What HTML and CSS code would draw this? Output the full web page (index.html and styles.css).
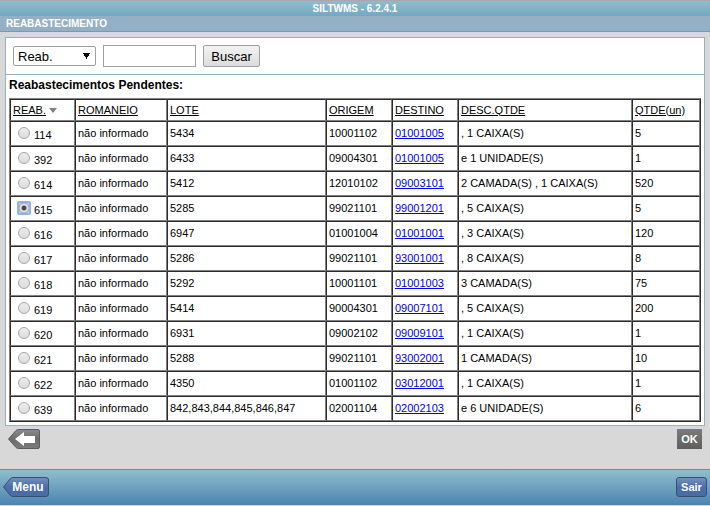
FILE: index.html
```html
<!DOCTYPE html>
<html lang="pt-BR">
<head>
  <meta charset="UTF-8">
  <meta name="viewport" content="width=device-width, initial-scale=1.0">
  <title>SILTWMS - 6.2.4.1</title>
  <link rel="stylesheet" href="styles.css">
</head>
<body>
  <header>
    <div class="system-title">SILTWMS - 6.2.4.1</div>
    <h1 class="screen-title">REABASTECIMENTO</h1>
  </header>

  <form id="formReab" class="main">
    <div class="panel">
      <!-- Filtro -->
      <div class="filter">
        <select class="filter-field" name="campo" aria-label="Campo">
          <option>Reab.</option>
          <option>Lote</option>
          <option>Origem</option>
          <option>Destino</option>
        </select>
        <input class="filter-text" type="text" name="valor" aria-label="Valor">
        <button class="search" type="button">Buscar</button>
      </div>

      <h2 class="list-title">Reabastecimentos Pendentes:</h2>
      <table class="list">
        <colgroup>
          <col class="col-reab">
          <col class="col-romaneio">
          <col class="col-lote">
          <col class="col-endereco">
          <col class="col-endereco">
          <col>
          <col class="col-qtde">
        </colgroup>
        <thead>
          <tr>
            <th><a href="#">REAB.</a><svg class="sort" width="8" height="5" viewBox="0 0 8 5"><path d="M0 0h8L4 5z" fill="#808080"/></svg></th>
            <th><a href="#">ROMANEIO</a></th>
            <th><a href="#">LOTE</a></th>
            <th><a href="#">ORIGEM</a></th>
            <th><a href="#">DESTINO</a></th>
            <th><a href="#">DESC.QTDE</a></th>
            <th><a href="#">QTDE(un)</a></th>
          </tr>
        </thead>
        <tbody>
          <tr><td><label><input type="radio" name="reab" value="114">114</label></td><td>não informado</td><td>5434</td><td>10001102</td><td><a href="#">01001005</a></td><td>, 1 CAIXA(S)</td><td>5</td></tr>
          <tr><td><label><input type="radio" name="reab" value="392">392</label></td><td>não informado</td><td>6433</td><td>09004301</td><td><a href="#">01001005</a></td><td>e 1 UNIDADE(S)</td><td>1</td></tr>
          <tr><td><label><input type="radio" name="reab" value="614">614</label></td><td>não informado</td><td>5412</td><td>12010102</td><td><a href="#">09003101</a></td><td>2 CAMADA(S) , 1 CAIXA(S)</td><td>520</td></tr>
          <tr><td><label><input type="radio" name="reab" value="615" checked>615</label></td><td>não informado</td><td>5285</td><td>99021101</td><td><a href="#">99001201</a></td><td>, 5 CAIXA(S)</td><td>5</td></tr>
          <tr><td><label><input type="radio" name="reab" value="616">616</label></td><td>não informado</td><td>6947</td><td>01001004</td><td><a href="#">01001001</a></td><td>, 3 CAIXA(S)</td><td>120</td></tr>
          <tr><td><label><input type="radio" name="reab" value="617">617</label></td><td>não informado</td><td>5286</td><td>99021101</td><td><a href="#">93001001</a></td><td>, 8 CAIXA(S)</td><td>8</td></tr>
          <tr><td><label><input type="radio" name="reab" value="618">618</label></td><td>não informado</td><td>5292</td><td>10001101</td><td><a href="#">01001003</a></td><td>3 CAMADA(S)</td><td>75</td></tr>
          <tr><td><label><input type="radio" name="reab" value="619">619</label></td><td>não informado</td><td>5414</td><td>90004301</td><td><a href="#">09007101</a></td><td>, 5 CAIXA(S)</td><td>200</td></tr>
          <tr><td><label><input type="radio" name="reab" value="620">620</label></td><td>não informado</td><td>6931</td><td>09002102</td><td><a href="#">09009101</a></td><td>, 1 CAIXA(S)</td><td>1</td></tr>
          <tr><td><label><input type="radio" name="reab" value="621">621</label></td><td>não informado</td><td>5288</td><td>99021101</td><td><a href="#">93002001</a></td><td>1 CAMADA(S)</td><td>10</td></tr>
          <tr><td><label><input type="radio" name="reab" value="622">622</label></td><td>não informado</td><td>4350</td><td>01001102</td><td><a href="#">03012001</a></td><td>, 1 CAIXA(S)</td><td>1</td></tr>
          <tr><td><label><input type="radio" name="reab" value="639">639</label></td><td>não informado</td><td>842,843,844,845,846,847</td><td>02001104</td><td><a href="#">02002103</a></td><td>e 6 UNIDADE(S)</td><td>6</td></tr>
        </tbody>
      </table>
    </div>

    <div class="actions">
      <button class="back" type="button" aria-label="Voltar">
        <svg width="32" height="20" viewBox="0 0 32 20">
          <defs>
            <linearGradient id="gray" x1="0" y1="0" x2="0" y2="1">
              <stop offset="0" stop-color="#8c8c8c"/>
              <stop offset="0.5" stop-color="#6c6c6c"/>
              <stop offset="1" stop-color="#7c7c7c"/>
            </linearGradient>
          </defs>
          <path d="M0.5 10L8 1.5Q9 0.5 10.5 0.5H30Q31.5 0.5 31.5 2V18Q31.5 19.5 30 19.5H10.5Q9 19.5 8 18.5Z" fill="url(#gray)" stroke="#5c5c5c"/>
          <path d="M7 10l9-7v4h11v7H16v3z" fill="#fff"/>
        </svg>
      </button>
      <button class="ok" type="submit">OK</button>
    </div>
  </form>

  <footer>
    <button class="menu" type="button">
      <svg class="menu-shape" width="46" height="20" viewBox="0 0 46 20">
        <defs>
          <linearGradient id="blue" x1="0" y1="0" x2="0" y2="1">
            <stop offset="0" stop-color="#7391bd"/>
            <stop offset="0.5" stop-color="#4a6ea9"/>
            <stop offset="1" stop-color="#4a6ca4"/>
          </linearGradient>
        </defs>
        <path d="M0.5 10L7 2Q8.5 0.5 10 0.5H43Q45.5 0.5 45.5 3V17Q45.5 19.5 43 19.5H10Q8.5 19.5 7 18Z" fill="url(#blue)" stroke="#375073"/>
      </svg>
      <span class="menu-text">Menu</span>
    </button>
    <button class="exit" type="button">Sair</button>
  </footer>

  <script>
    document.getElementById("formReab").addEventListener("submit", function (event) {
      event.preventDefault();
    });
  </script>
</body>
</html>
```
FILE: styles.css
```css
body {
  margin: 0;
  min-height: 100vh;
  display: flex;
  flex-direction: column;
  background-color: #d8d8d8;
  color: #000;
  font-family: "Liberation Sans", Arial, sans-serif;
  font-size: 11px;
}
h1,
h2 {
  margin: 0;
}
button {
  padding: 0;
  font-family: inherit;
  cursor: pointer;
}

/* Header */
.system-title {
  height: 15px;
  line-height: 15px;
  border-top: 1px solid #a9a9a9;
  background: linear-gradient(#8fbccd, #74a8c1);
  color: #fff;
  font-size: 10px;
  font-weight: bold;
  text-align: center;
}
.screen-title {
  height: 15px;
  line-height: 15px;
  padding-left: 6px;
  border-bottom: 1px solid #7a9ab3;
  background-color: #95b0c4;
  color: #fff;
  font-size: 10px;
}

/* Content */
.main {
  padding: 5px 5px 20px;
}
.panel {
  border: 1px solid #94b1c6;
  background-color: #fff;
  padding-bottom: 3px;
}
.filter {
  display: flex;
  align-items: center;
  gap: 7px;
  height: 36px;
  padding-left: 7px;
  border-bottom: 1px solid #94b1c6;
}
.filter-field {
  appearance: none;
  width: 83px;
  height: 20px;
  padding: 0 4px;
  border: 1px solid #a0a0a0;
  border-radius: 2px;
  background-color: #fff;
  /* drop-down arrow */
  background-image: conic-gradient(from -30deg at 50% 100%, #000 60deg, transparent 0);
  background-position: right 5px center;
  background-size: 7px 6px;
  background-repeat: no-repeat;
  font-family: inherit;
  font-size: 13px;
  color: #000;
}
.filter-text {
  box-sizing: border-box;
  width: 93px;
  height: 22px;
  padding: 1px 3px;
  border: 1px solid #a0a0a0;
  font-family: inherit;
  font-size: 13px;
}
.search {
  width: 57px;
  height: 22px;
  border: 1px solid #a0a0a0;
  border-radius: 2px;
  background: linear-gradient(#f2f2f2, #dcdcdc);
  color: #000;
  font-size: 13px;
}
.list-title {
  padding: 4px 3px 6px;
  font-size: 12px;
  line-height: 13px;
}

/* Table */
.list {
  width: calc(100% - 6px);
  margin: 0 3px;
  table-layout: fixed;
  border-collapse: separate;
  border-spacing: 0;
  border: 1px solid;
  border-color: #808080 #2c2c2c #2c2c2c #808080;
}
.col-reab { width: 65px; }
.col-romaneio { width: 92px; }
.col-lote { width: 159px; }
.col-endereco { width: 66px; }
.col-qtde { width: 68px; }
.list th,
.list td {
  box-sizing: border-box;
  height: 25px;
  padding: 0 2px;
  border: 1px solid;
  border-color: #2c2c2c #808080 #808080 #2c2c2c;
  line-height: 13px;
  font-weight: normal;
  text-align: left;
  white-space: nowrap;
}
.list th {
  height: 22px;
}
.list th a {
  color: #000;
}
.list td a {
  color: #0000ee;
}
.sort {
  margin-left: 3px;
  vertical-align: 1px;
}
.list label {
  display: flex;
  align-items: flex-end;
  gap: 4px;
  padding-left: 5px;
}
.list input {
  appearance: none;
  box-sizing: border-box;
  width: 12px;
  height: 12px;
  margin: 1px 0 3px;
  border: 1px solid #a8a8a8;
  border-radius: 50%;
  background: linear-gradient(#ececec, #dcdcdc);
}
/* selected row, with the square focus ring */
.list input:checked {
  width: 14px;
  height: 14px;
  margin: 0 -1px 2px;
  border: 2px solid #8db2f0;
  border-radius: 2px;
  background: radial-gradient(circle, #484848 2px, #e4e4e4 3px, #e4e4e4 4px, #a0a0a0 5px, #d0dcf4 6px);
}

/* Buttons */
.actions {
  display: flex;
  justify-content: space-between;
  padding: 3px 3px 0;
}
.back {
  border: none;
  background: none;
}
.back svg {
  display: block;
}
.ok {
  width: 25px;
  height: 20px;
  border: none;
  background: linear-gradient(#7c7c7c, #5e5e5e);
  color: #fff;
  font-size: 11px;
  font-weight: bold;
}

/* Footer */
footer {
  flex: 1;
  display: flex;
  align-items: flex-start;
  justify-content: space-between;
  padding: 7px 3px;
  border-top: 1px solid #858585;
  border-bottom: 1px solid #c4d6e4;
  background: linear-gradient(#8fbecd, #4c84b0);
}
.menu {
  position: relative;
  width: 46px;
  height: 20px;
  border: none;
  background: none;
  color: #fff;
  font-size: 12px;
  font-weight: bold;
}
.menu-shape {
  position: absolute;
  left: 0;
  top: 0;
}
.menu-text {
  position: relative;
  padding-left: 4px;
}
.exit {
  width: 31px;
  height: 20px;
  border: 1px solid #375073;
  border-radius: 3px;
  background: linear-gradient(#7391bd, #4a6ea9 50%, #4a6ca4);
  color: #fff;
  font-size: 11px;
  font-weight: bold;
}
```
